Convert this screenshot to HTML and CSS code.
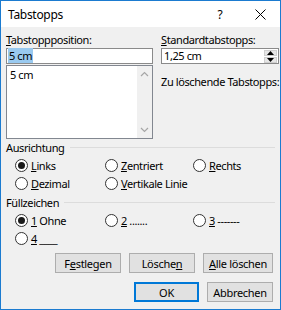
FILE: index.html
```html
<!DOCTYPE html>
<html>
<head>
<meta charset="utf-8">
<link rel="stylesheet" href="styles.css">
</head>
<body>
<div class="window">
  <div class="titlebar">
    <span class="title">Tabstopps</span>
    <span class="help">?</span>
    <span class="close"><svg width="11" height="11" viewBox="0 0 11 11"><path d="M0.5 0.5 L10.5 10.5 M10.5 0.5 L0.5 10.5" stroke="#000" stroke-width="1" fill="none"/></svg></span>
  </div>
  <div class="body">
    <div class="top">
      <div class="col-left">
        <div class="lbl"><u>T</u>abstoppposition:</div>
        <div class="input"><span class="sel">5 cm</span></div>
        <div class="list">
          <div class="list-items"><div class="item">5 cm</div></div>
          <div class="vscroll">
            <svg width="9" height="6" viewBox="0 0 9 6"><path d="M1 5 L4.5 1.5 L8 5" stroke="#a6a6a6" stroke-width="1.2" fill="none"/></svg>
            <svg width="9" height="6" viewBox="0 0 9 6"><path d="M1 1 L4.5 4.5 L8 1" stroke="#a6a6a6" stroke-width="1.2" fill="none"/></svg>
          </div>
        </div>
      </div>
      <div class="col-right">
        <div class="lbl"><u>S</u>tandardtabstopps:</div>
        <div class="spin">
          <div class="spin-val">1,25 cm</div>
          <div class="spin-btns">
            <span class="sb"><svg width="7" height="4" viewBox="0 0 7 4"><path d="M0 4 L3.5 0 L7 4 Z" fill="#000"/></svg></span>
            <span class="sb"><svg width="7" height="4" viewBox="0 0 7 4"><path d="M0 0 L3.5 4 L7 0 Z" fill="#000"/></svg></span>
          </div>
        </div>
        <div class="lbl zu">Zu löschende Tabstopps:</div>
      </div>
    </div>

    <div class="group">
      <div class="group-head"><span>Ausrichtung</span><span class="rule"></span></div>
      <div class="radios">
        <div class="radio"><span class="circle on"></span><span><u>L</u>inks</span></div>
        <div class="radio"><span class="circle"></span><span><u>Z</u>entriert</span></div>
        <div class="radio"><span class="circle"></span><span><u>R</u>echts</span></div>
        <div class="radio"><span class="circle"></span><span><u>D</u>ezimal</span></div>
        <div class="radio"><span class="circle"></span><span><u>V</u>ertikale Linie</span></div>
      </div>
    </div>

    <div class="group g2">
      <div class="group-head"><span>Füllzeichen</span><span class="rule"></span></div>
      <div class="radios">
        <div class="radio"><span class="circle on"></span><span><u>1</u> Ohne</span></div>
        <div class="radio"><span class="circle"></span><span><u>2</u> .......</span></div>
        <div class="radio"><span class="circle"></span><span><u>3</u> -------</span></div>
        <div class="radio"><span class="circle"></span><span><u>4</u> ____</span></div>
      </div>
    </div>

    <div class="btnrow">
      <button class="btn w66">F<u>e</u>stlegen</button>
      <button class="btn w66">Lösche<u>n</u></button>
      <button class="btn w70"><u>A</u>lle löschen</button>
    </div>
    <div class="btnrow r2">
      <button class="btn w65 default">OK</button>
      <button class="btn w66">Abbrechen</button>
    </div>
  </div>
</div>
</body>
</html>
```

FILE: styles.css
```css
html, body {
  margin: 0;
  padding: 0;
}
body {
  font-family: "Noto Sans", "Liberation Sans", sans-serif;
  font-size: 11px;
  letter-spacing: -0.4px;
  color: #000;
}
u {
  text-decoration: underline;
  text-underline-offset: 1px;
}
.window {
  width: 281px;
  height: 310px;
  box-sizing: border-box;
  border: 1px solid #1b7bd0;
  background: #f0f0f0;
  display: flex;
  flex-direction: column;
}
.titlebar {
  height: 26px;
  background: #fff;
  display: flex;
  align-items: center;
  padding-left: 7px;
  flex: none;
}
.title {
  font-size: 12px;
  letter-spacing: -0.3px;
  flex: 1;
}
.help, .close {
  width: 40px;
  height: 26px;
  display: flex;
  align-items: center;
  justify-content: center;
  font-size: 12px;
}
.body {
  padding: 5px 5px 0 5px;
}
.top {
  display: flex;
  gap: 8px;
}
.col-left {
  width: 147px;
  flex: none;
}
.col-right {
  flex: 1;
}
.lbl {
  height: 16px;
  line-height: 16px;
  white-space: nowrap;
}
.input {
  height: 16px;
  box-sizing: border-box;
  border: 1px solid #8a8a8a;
  background: #fff;
  line-height: 13px;
  padding-left: 1px;
}
.sel {
  background: #99c9ef;
  padding: 0 1px;
}
.list {
  margin-top: 1px;
  height: 74px;
  box-sizing: border-box;
  border: 1px solid #828790;
  background: #fff;
  display: flex;
}
.list-items {
  flex: 1;
  padding: 2px 3px;
}
.item {
  line-height: 14px;
}
.vscroll {
  width: 15px;
  background: #f0f0f0;
  display: flex;
  flex-direction: column;
  align-items: center;
  justify-content: space-between;
  padding: 5px 0;
}
.spin {
  height: 16px;
  box-sizing: border-box;
  border: 1px solid #8a8a8a;
  background: #fff;
  display: flex;
}
.spin-val {
  flex: 1;
  line-height: 14px;
  padding-left: 2px;
}
.spin-btns {
  width: 13px;
  display: flex;
  flex-direction: column;
  gap: 1px;
  padding: 1px 1px 1px 0;
}
.sb {
  flex: 1;
  background: #e6e6e6;
  border: 1px solid #cfcfcf;
  display: flex;
  align-items: center;
  justify-content: center;
}
.zu {
  margin-top: 10px;
}
.group-head {
  display: flex;
  align-items: center;
  height: 17px;
  line-height: 16px;
}
.group-head .rule {
  flex: 1;
  height: 1px;
  background: #dcdcdc;
  margin-left: 5px;
}
.g2 {
  margin-top: 2px;
}
.radios {
  display: grid;
  grid-template-columns: 90px 88px 1fr;
  grid-auto-rows: 18px;
  padding-left: 9px;
}
.radio {
  display: flex;
  align-items: center;
  gap: 3px;
  white-space: nowrap;
}
.circle {
  width: 13px;
  height: 13px;
  box-sizing: border-box;
  border: 1px solid #333;
  border-radius: 50%;
  background: #fff;
  display: flex;
  align-items: center;
  justify-content: center;
  flex: none;
}
.circle.on::after {
  content: "";
  width: 7px;
  height: 7px;
  border-radius: 50%;
  background: #1a1a1a;
}
.btnrow {
  display: flex;
  justify-content: flex-end;
  gap: 8px;
  padding-right: 2px;
  margin-top: 6px;
}
.btnrow.r2 {
  margin-top: 9px;
}
.btn {
  height: 20px;
  box-sizing: border-box;
  border: 1px solid #adadad;
  background: #e1e1e1;
  font-family: inherit;
  font-size: 11px;
  letter-spacing: -0.3px;
  color: #000;
  padding: 0;
  margin: 0;
}
.btn.default {
  border: 1px solid #0078d7;
  box-shadow: inset 0 0 0 1px #0078d7;
}
.w65 { width: 65px; }
.w66 { width: 66px; }
.w70 { width: 70px; }
```
